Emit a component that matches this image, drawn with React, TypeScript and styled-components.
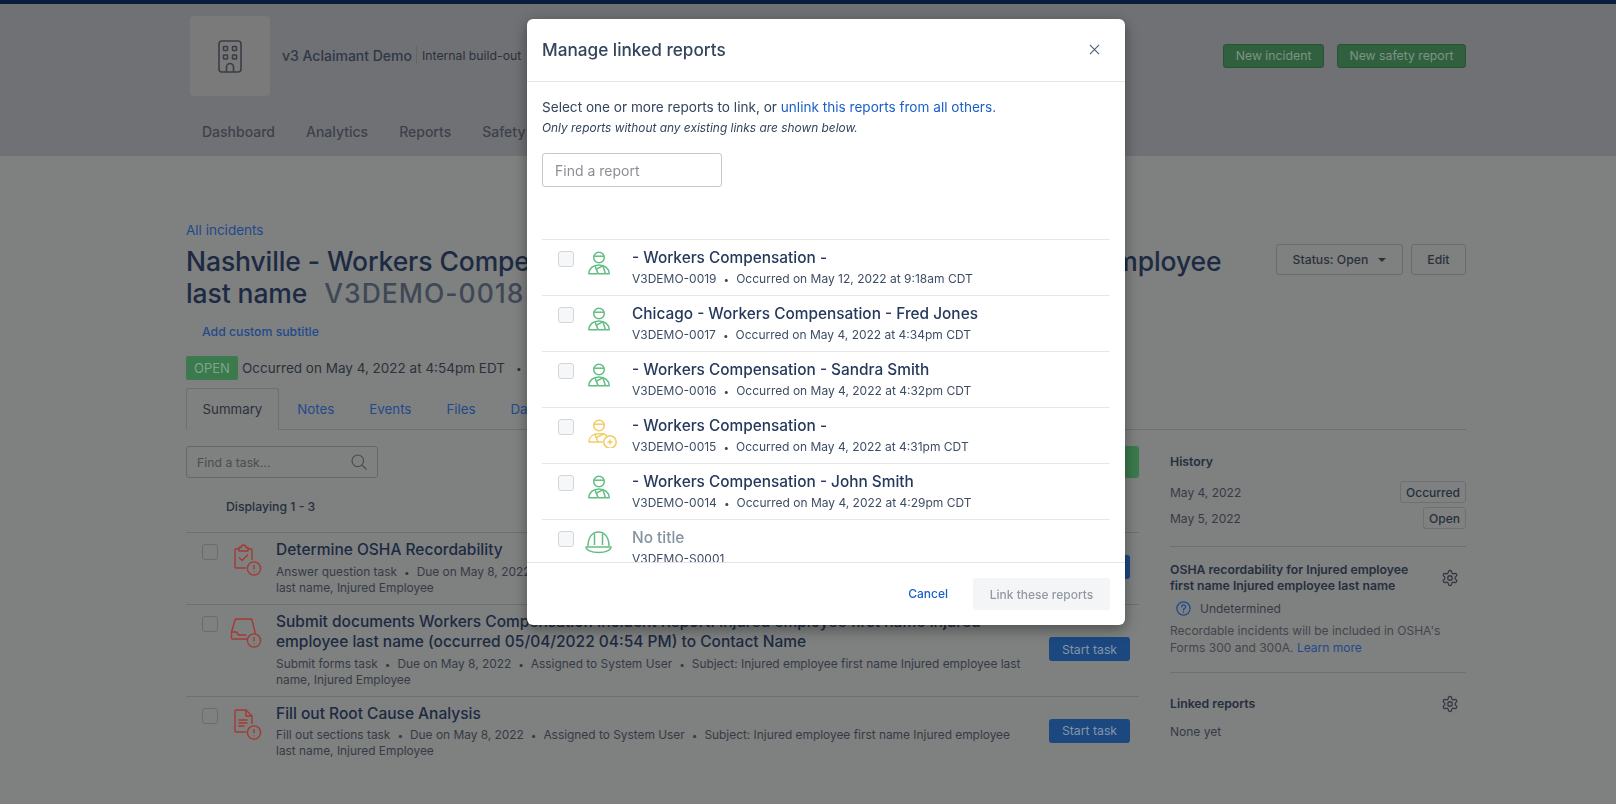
import React from "react";
import styled, { createGlobalStyle } from "styled-components";

const GlobalStyle = createGlobalStyle`
    html, body {
        margin: 0;
        height: 100%;
        overflow: hidden;
        background-color: #7f8080;
        font-family: Inter, "Liberation Sans", sans-serif;
        color: #262f3e;
    }
    * { box-sizing: border-box; }
`;

const TopStripe = styled.div`
    height: 4px;
    background-color: #0c1c3c;
`;

const Header = styled.header`
    height: 152px;
    background-color: #707175;
    padding-left: 186px;
`;

const HeaderInner = styled.div`
    width: 1280px;
    padding-top: 12px;
`;

const BrandRow = styled.div`
    display: flex;
    align-items: center;
    padding-left: 4px;
`;

const LogoBox = styled.div`
    width: 80px;
    height: 80px;
    background-color: #7a7a7a;
    border-radius: 4px;
    display: flex;
    align-items: center;
    justify-content: center;
`;

const BrandName = styled.div`
    margin: 0 0 2px 12px;
    font-size: 14px;
    font-weight: 500;
    color: #2f3847;
`;

const BrandNote = styled.div`
    margin: 0 0 2px 4px;
    padding-left: 5px;
    border-left: 1px solid #62656a;
    font-size: 12.25px;
    line-height: 19px;
    color: #2b313b;
`;

const HeaderActions = styled.div`
    margin-left: auto;
    display: flex;
    gap: 13px;
`;

const GreenButton = styled.div`
    height: 24px;
    padding: 0 11.5px 1px;
    display: flex;
    align-items: center;
    background-color: #31603f;
    border: 1px solid #2a5236;
    border-radius: 3px;
    font-size: 12.25px;
    color: #7d9484;
`;

const Nav = styled.nav`
    display: flex;
    gap: 31px;
    margin-top: 27px;
    padding-left: 16px;
    font-size: 14px;
    font-weight: 500;
    color: #3c414a;
`;

const Content = styled.main`
    width: 1280px;
    margin-left: 186px;
    padding-top: 64px;
`;

const BackLink = styled.div`
    font-size: 13.5px;
    line-height: 20px;
    color: #1f4a8c;
`;

const TitleRow = styled.div`
    display: flex;
    justify-content: space-between;
    margin-top: 5px;
`;

const PageTitle = styled.h1`
    width: 1080px;
    margin: 0;
    font-size: 26.5px;
    line-height: 32px;
    font-weight: 500;
    letter-spacing: -0.1px;
    color: #1c2a42;
`;

const RefCode = styled.span`
    margin-left: 17px;
    letter-spacing: 1px;
    color: #3f4855;
`;

const TitleActions = styled.div`
    display: flex;
    gap: 8px;
    margin-top: -1px;
`;

const OutlineButton = styled.div`
    height: 31px;
    padding: 0 15.5px;
    display: flex;
    align-items: center;
    gap: 8px;
    border: 1px solid #6a6b6c;
    border-radius: 3px;
    font-size: 12.25px;
    font-weight: 500;
    color: #2b313b;
`;

const Caret = styled.span`
    border-left: 4px solid transparent;
    border-right: 4px solid transparent;
    border-top: 4px solid #2b313b;
    margin-left: 2px;
`;

const SubtitleLink = styled.div`
    margin: 14px 0 0 16px;
    font-size: 12.25px;
    line-height: 18px;
    font-weight: 500;
    color: #1f4a8c;
`;

const MetaRow = styled.div`
    display: flex;
    align-items: center;
    gap: 4px;
    margin-top: 15px;
    font-size: 13.5px;
    white-space: nowrap;
    color: #2b313b;
`;

const StatusBadge = styled.span`
    width: 52px;
    height: 24px;
    display: flex;
    align-items: center;
    justify-content: center;
    background-color: #3a7a4c;
    border-radius: 2px;
    font-size: 13px;
    color: #7fa58a;
`;

const Tabs = styled.div`
    display: flex;
    height: 42px;
    margin-top: 8px;
    border-bottom: 1px solid #6e6f70;
    font-size: 13.3px;
`;

const Tab = styled.div<{ $active?: boolean }>`
    height: 42px;
    padding: 0 15.5px;
    margin-right: ${(p) => (p.$active ? "3px" : "4px")};
    display: flex;
    align-items: center;
    color: ${(p) => (p.$active ? "#2b313b" : "#1f4a8c")};
    ${(p) => p.$active && "border: 1px solid #6e6f70; border-bottom-color: #7f8080; border-radius: 3px 3px 0 0;"}
`;

const Columns = styled.div`
    display: flex;
    justify-content: space-between;
`;

const TaskColumn = styled.section`
    width: 953px;
`;

const TaskToolbar = styled.div`
    display: flex;
    justify-content: space-between;
    margin-top: 16px;
`;

const TaskSearch = styled.div`
    width: 192px;
    height: 32px;
    padding: 0 10px;
    display: flex;
    align-items: center;
    justify-content: space-between;
    border: 1px solid #66686a;
    border-radius: 3px;
    font-size: 12.25px;
    color: #4a4d52;
`;

const AddTaskButton = styled.div`
    width: 90px;
    height: 32px;
    background-color: #3a7a4c;
    border-radius: 3px;
`;

const Displaying = styled.div`
    height: 54px;
    padding: 20px 0 0 40px;
    font-size: 12.25px;
    font-weight: 500;
    line-height: 18px;
    color: #262f3e;
`;

const TaskRow = styled.div`
    display: flex;
    padding: 7px 0 8px 16px;
    border-top: 1px solid #6e6f70;
`;

const DimCheck = styled.div`
    flex: none;
    width: 16px;
    height: 16px;
    margin-top: 4px;
    border: 1px solid #6b6c6e;
    border-radius: 3px;
`;

const TaskIcon = styled.div`
    flex: none;
    width: 28px;
    height: 32px;
    margin: 4px 14px 0 16px;
`;

const TaskText = styled.div`
    flex: 1;
    min-width: 0;
`;

const TaskTitle = styled.div`
    font-size: 15.5px;
    line-height: 20.5px;
    font-weight: 500;
    color: #1c2a42;
`;

const TaskSub = styled.div`
    margin-top: 3px;
    font-size: 11.9px;
    line-height: 16px;
    color: #353b45;
`;

const Dot = styled.span`
    margin: 0 7px;
    font-size: 10px;
`;

const StartButton = styled.div`
    flex: none;
    align-self: center;
    width: 81px;
    height: 24px;
    margin: 0 9px 1px 19px;
    display: flex;
    align-items: center;
    justify-content: center;
    background-color: #1c4880;
    border-radius: 3px;
    font-size: 12.25px;
    color: #8594a8;
`;

const SideColumn = styled.aside`
    width: 296px;
    padding-top: 24px;
    font-size: 12px;
    color: #353b45;
`;

const SideSection = styled.div`
    padding: 0 0 16px;
    margin-bottom: 15px;
    border-bottom: 1px solid #6e6f70;
    &:last-child {
        border-bottom: none;
        padding-top: 7px;
    }
`;

const SideHeading = styled.div`
    font-size: 12.25px;
    line-height: 16px;
    font-weight: 600;
    color: #262f3e;
`;

const HeadingRow = styled.div`
    display: flex;
    justify-content: space-between;
    align-items: center;
    padding-right: 7px;
    gap: 20px;
`;

const GearWrap = styled.div`
    flex: none;
    width: 18px;
    height: 18px;
`;

const HistoryList = styled.div`
    margin: 9px 0 -1px;
`;

const HistoryRow = styled.div`
    display: flex;
    justify-content: space-between;
    align-items: center;
    height: 26px;
`;

const HistoryTag = styled.span`
    height: 22px;
    padding: 0 5px;
    display: flex;
    align-items: center;
    border: 1px solid #6e6f70;
    border-radius: 3px;
    font-weight: 500;
    color: #262f3e;
`;

const Undetermined = styled.div`
    display: flex;
    align-items: center;
    gap: 9px;
    margin: 4px 0 5px 6px;
    height: 20px;
`;

const SideNote = styled.div`
    line-height: 16.5px;
    color: #42464d;
`;

const SideLink = styled.span`
    color: #1f4a8c;
`;

const NoneYet = styled.div`
    margin-top: 11px;
    line-height: 16px;
`;

const Modal = styled.div`
    position: fixed;
    top: 19px;
    left: 527px;
    width: 598px;
    height: 606px;
    display: flex;
    flex-direction: column;
    background-color: #fff;
    border-radius: 6px;
    box-shadow: 0 4px 14px rgba(0, 0, 0, 0.4);
    color: #33445c;
`;

const ModalHeader = styled.div`
    flex: none;
    height: 63px;
    padding: 0 19px 2px 15px;
    display: flex;
    align-items: center;
    justify-content: space-between;
    border-bottom: 1px solid #e2e4e7;
`;

const ModalTitle = styled.h2`
    margin: 0;
    font-size: 17.2px;
    font-weight: 500;
    color: #33445c;
`;

const CloseButton = styled.div`
    width: 24px;
    height: 24px;
    display: flex;
    align-items: center;
    justify-content: center;
    color: #51637a;
`;

const ModalBody = styled.div`
    flex: 1;
    min-height: 0;
    display: flex;
    flex-direction: column;
    padding: 15px 15px 0;
`;

const Intro = styled.div`
    font-size: 13.6px;
    line-height: 20px;
`;

const IntroLink = styled.span`
    color: #1a5fc8;
`;

const IntroNote = styled.div`
    font-size: 11.9px;
    line-height: 21px;
    font-style: italic;
`;

const FindReport = styled.div`
    width: 180px;
    height: 34px;
    margin-top: 15px;
    padding: 0 12px;
    display: flex;
    align-items: center;
    flex: none;
    border: 1px solid #c3c6ca;
    border-radius: 3px;
    font-size: 14px;
    color: #8b8f94;
`;

const ReportList = styled.div`
    flex: 1;
    min-height: 0;
    margin-top: 52px;
    overflow: hidden;
`;

const ReportRow = styled.div`
    height: 56px;
    padding: 11px 0 0 16px;
    display: flex;
    border-top: 1px solid #e5e7ea;
`;

const ReportCheck = styled.div`
    flex: none;
    width: 16px;
    height: 16px;
    border: 1px solid #d3d6da;
    border-radius: 3px;
    background-color: #f6f7f8;
`;

const ReportIcon = styled.div`
    flex: none;
    width: 28px;
    height: 28px;
    margin: 0 16px 0 14px;
`;

const ReportText = styled.div`
    margin-top: -3px;
`;

const ReportTitle = styled.div<{ $muted?: boolean }>`
    font-size: 15.4px;
    line-height: 20px;
    font-weight: 500;
    white-space: nowrap;
    color: ${(p) => (p.$muted ? "#87929f" : "#24395b")};
`;

const ReportSub = styled.div`
    font-size: 12px;
    line-height: 16px;
    margin-top: 3px;
    white-space: nowrap;
    color: #3d4d63;
`;

const ModalFooter = styled.div`
    flex: none;
    height: 63px;
    padding: 0 15px;
    display: flex;
    align-items: center;
    justify-content: flex-end;
    gap: 25px;
    border-top: 1px solid #e2e4e7;
`;

const CancelLink = styled.div`
    font-size: 12px;
    font-weight: 500;
    margin-bottom: 1px;
    color: #1a5fc8;
`;

const LinkButton = styled.div`
    width: 137px;
    height: 32px;
    display: flex;
    align-items: center;
    justify-content: center;
    background-color: #f4f5f6;
    border-radius: 3px;
    font-size: 12px;
    font-weight: 500;
    color: #9299a3;
`;

function BuildingIcon() {
    return (
        <svg width="24" height="33" viewBox="0 0 24 33" fill="none" stroke="#3a3f47" strokeWidth="1.6">
            <rect x="1" y="1" width="22" height="31" rx="3" />
            <rect x="5.5" y="6.5" width="4" height="4" rx="0.6" />
            <rect x="14.5" y="6.5" width="4" height="4" rx="0.6" />
            <rect x="5.5" y="15" width="4" height="4" rx="0.6" />
            <rect x="14.5" y="15" width="4" height="4" rx="0.6" />
            <path d="M8.5 32v-5a3.5 3.5 0 0 1 7 0v5" />
        </svg>
    );
}

function WorkerIcon({ color }: { color: string }) {
    return (
        <svg width="22" height="24" viewBox="0 0 22 24" fill="none" stroke={color} strokeWidth="1.5" strokeLinejoin="round">
            <circle cx="11" cy="6.5" r="5.3" />
            <path d="M5.8 5.2h10.4" />
            <path d="M0.8 22.8C1 17.5 5 14 11 14s10 3.5 10.2 8.8z" />
            <path d="M7 14.8l3.2 8M7.5 18.5l7.5-3.6M15 15l2.5 7.8" />
        </svg>
    );
}

function WorkerAddIcon({ color }: { color: string }) {
    return (
        <svg width="29" height="29" viewBox="0 0 29 29" fill="none" stroke={color} strokeWidth="1.5" strokeLinejoin="round">
            <circle cx="11" cy="6.5" r="5.3" />
            <path d="M5.8 5.2h10.4" />
            <path d="M0.8 23C1 18 5 14.8 11 14.8h5l3 2.2M0.8 23h14" />
            <path d="M7 15.5l3 7.5M7.5 19l8-4" />
            <circle cx="22" cy="23" r="6.2" />
            <path d="M22 20.5v5M19.5 23h5" />
        </svg>
    );
}

const HatWrap = styled.div`
    margin-left: -3px;
`;

function HardHatIcon({ color }: { color: string }) {
    return (
        <HatWrap>
            <svg width="27" height="23" viewBox="0 0 27 23" fill="none" stroke={color} strokeWidth="1.5" strokeLinejoin="round">
                <path d="M3 15C3 6 7.5 1 13.5 1S24 6 24 15" />
                <path d="M9.5 2.5V14M17.5 2.5V14" />
                <path d="M1 16h25c0 3-5 5.5-12.5 5.5S1 19 1 16z" />
            </svg>
        </HatWrap>
    );
}

function AlertBadge() {
    return (
        <g stroke="#a33a33" strokeWidth="1.4" fill="#7f8080">
            <circle cx="20" cy="24.5" r="6.6" />
            <path d="M20 21v4.2M20 27.4v.8" />
        </g>
    );
}

const TaskSvg = styled.svg`
    overflow: visible;
`;

function ClipboardIcon() {
    return (
        <TaskSvg width="28" height="32" viewBox="0 0 28 32" fill="none" stroke="#a33a33" strokeWidth="1.4" strokeLinejoin="round">
            <path d="M5 5H2a1 1 0 0 0-1 1v17a1 1 0 0 0 1 1h10M14 5h3a1 1 0 0 1 1 1v10" />
            <path d="M5 7V3.5h2.2c0-3.4 4.6-3.4 4.6 0H14V7z" />
            <path d="M5 13.5l3 3 6-6" />
            <AlertBadge />
        </TaskSvg>
    );
}

function InboxIcon() {
    return (
        <TaskSvg width="28" height="32" viewBox="0 0 28 32" fill="none" stroke="#a33a33" strokeWidth="1.4" strokeLinejoin="round">
            <path d="M-2.5 16L1 4a1.5 1.5 0 0 1 1.5-1h14a1.5 1.5 0 0 1 1.5 1l3 12" />
            <path d="M-2.5 16v6a1 1 0 0 0 1 1H14M-2.5 16h5l2 3h8" />
            <path d="M21 16v2" />
            <AlertBadge />
        </TaskSvg>
    );
}

function FileIcon() {
    return (
        <TaskSvg width="28" height="32" viewBox="0 0 28 32" fill="none" stroke="#a33a33" strokeWidth="1.4" strokeLinejoin="round">
            <path d="M12 24H2a1 1 0 0 1-1-1V3a1 1 0 0 1 1-1h10l6 6v8" />
            <path d="M12 2v6h6M4.5 12h9M4.5 15h9M4.5 18h6" />
            <AlertBadge />
        </TaskSvg>
    );
}

function SearchIcon() {
    return (
        <svg width="16" height="16" viewBox="0 0 16 16" fill="none" stroke="#4a4d52" strokeWidth="1.2">
            <circle cx="6.8" cy="6.8" r="5.8" />
            <path d="M11 11l4.5 4.5" />
        </svg>
    );
}

function GearIcon() {
    return (
        <GearWrap>
            <svg width="18" height="18" viewBox="0 0 24 24" fill="none" stroke="#33383f" strokeWidth="1.7" strokeLinecap="round" strokeLinejoin="round">
                <path d="M12.2 2h-.4a2 2 0 0 0-2 2v.2a2 2 0 0 1-1 1.7l-.4.3a2 2 0 0 1-2 0l-.2-.1a2 2 0 0 0-2.7.7l-.2.4a2 2 0 0 0 .7 2.7l.2.1a2 2 0 0 1 1 1.7v.5a2 2 0 0 1-1 1.8l-.2.1a2 2 0 0 0-.7 2.7l.2.4a2 2 0 0 0 2.7.7l.2-.1a2 2 0 0 1 2 0l.4.3a2 2 0 0 1 1 1.7v.2a2 2 0 0 0 2 2h.4a2 2 0 0 0 2-2v-.2a2 2 0 0 1 1-1.7l.4-.3a2 2 0 0 1 2 0l.2.1a2 2 0 0 0 2.7-.7l.2-.4a2 2 0 0 0-.7-2.7l-.2-.1a2 2 0 0 1-1-1.8v-.5a2 2 0 0 1 1-1.7l.2-.1a2 2 0 0 0 .7-2.7l-.2-.4a2 2 0 0 0-2.7-.7l-.2.1a2 2 0 0 1-2 0l-.4-.3a2 2 0 0 1-1-1.7V4a2 2 0 0 0-2-2z" />
                <circle cx="12" cy="12" r="3" />
            </svg>
        </GearWrap>
    );
}

function QuestionIcon() {
    return (
        <svg width="15" height="15" viewBox="0 0 15 15" fill="none" stroke="#1f4a8c" strokeWidth="1.3" strokeLinecap="round">
            <circle cx="7.5" cy="7.5" r="6.6" />
            <path d="M5.6 5.8a2 2 0 1 1 2.9 1.8c-.6.3-1 .7-1 1.4" />
            <path d="M7.5 11v.2" />
        </svg>
    );
}

function CloseIcon() {
    return (
        <svg width="11" height="11" viewBox="0 0 12 12" fill="none" stroke="currentColor" strokeWidth="1.3">
            <path d="M1 1l10 10M11 1L1 11" />
        </svg>
    );
}

const GREEN = "#63bd82";
const YELLOW = "#f3cd62";

const reports = [
    { title: "- Workers Compensation -", code: "V3DEMO-0019", when: "Occurred on May 12, 2022 at 9:18am CDT", icon: <WorkerIcon color={GREEN} /> },
    { title: "Chicago - Workers Compensation - Fred Jones", code: "V3DEMO-0017", when: "Occurred on May 4, 2022 at 4:34pm CDT", icon: <WorkerIcon color={GREEN} /> },
    { title: "- Workers Compensation - Sandra Smith", code: "V3DEMO-0016", when: "Occurred on May 4, 2022 at 4:32pm CDT", icon: <WorkerIcon color={GREEN} /> },
    { title: "- Workers Compensation -", code: "V3DEMO-0015", when: "Occurred on May 4, 2022 at 4:31pm CDT", icon: <WorkerAddIcon color={YELLOW} /> },
    { title: "- Workers Compensation - John Smith", code: "V3DEMO-0014", when: "Occurred on May 4, 2022 at 4:29pm CDT", icon: <WorkerIcon color={GREEN} /> },
    { title: "No title", code: "V3DEMO-S0001", muted: true, icon: <HardHatIcon color={GREEN} /> },
];

const subject = "Subject: Injured employee first name Injured employee last name, Injured Employee";

const tasks = [
    { title: "Determine OSHA Recordability", kind: "Answer question task", icon: <ClipboardIcon /> },
    {
        title: "Submit documents Workers Compensation Incident Report: Injured employee first name Injured employee last name (occurred 05/04/2022 04:54 PM) to Contact Name",
        kind: "Submit forms task",
        icon: <InboxIcon />,
    },
    { title: "Fill out Root Cause Analysis", kind: "Fill out sections task", icon: <FileIcon /> },
];

export default function App() {
    return (
        <>
            <GlobalStyle />
            <TopStripe />
            <Header>
                <HeaderInner>
                    <BrandRow>
                        <LogoBox><BuildingIcon /></LogoBox>
                        <BrandName>v3 Aclaimant Demo</BrandName>
                        <BrandNote>Internal build-out</BrandNote>
                        <HeaderActions>
                            <GreenButton>New incident</GreenButton>
                            <GreenButton>New safety report</GreenButton>
                        </HeaderActions>
                    </BrandRow>
                    <Nav>
                        <span>Dashboard</span>
                        <span>Analytics</span>
                        <span>Reports</span>
                        <span>Safety</span>
                    </Nav>
                </HeaderInner>
            </Header>
            <Content>
                <BackLink>All incidents</BackLink>
                <TitleRow>
                    <PageTitle>
                        Nashville - Workers Compensation - Injured employee first name Injured employee last name
                        <RefCode>V3DEMO-0018</RefCode>
                    </PageTitle>
                    <TitleActions>
                        <OutlineButton>Status: Open <Caret /></OutlineButton>
                        <OutlineButton>Edit</OutlineButton>
                    </TitleActions>
                </TitleRow>
                <SubtitleLink>Add custom subtitle</SubtitleLink>
                <MetaRow>
                    <StatusBadge>OPEN</StatusBadge>
                    Occurred on May 4, 2022 at 4:54pm EDT
                    <Dot>•</Dot>
                </MetaRow>
                <Tabs>
                    <Tab $active>Summary</Tab>
                    <Tab>Notes</Tab>
                    <Tab>Events</Tab>
                    <Tab>Files</Tab>
                    <Tab>Data</Tab>
                </Tabs>
                <Columns>
                    <TaskColumn>
                        <TaskToolbar>
                            <TaskSearch>Find a task... <SearchIcon /></TaskSearch>
                            <AddTaskButton />
                        </TaskToolbar>
                        <Displaying>Displaying 1 - 3</Displaying>
                        {tasks.map((task) => (
                            <TaskRow key={task.kind}>
                                <DimCheck />
                                <TaskIcon>{task.icon}</TaskIcon>
                                <TaskText>
                                    <TaskTitle>{task.title}</TaskTitle>
                                    <TaskSub>
                                        {task.kind}<Dot>•</Dot>Due on May 8, 2022<Dot>•</Dot>Assigned to System User<Dot>•</Dot>{subject}
                                    </TaskSub>
                                </TaskText>
                                <StartButton>Start task</StartButton>
                            </TaskRow>
                        ))}
                    </TaskColumn>
                    <SideColumn>
                        <SideSection>
                            <SideHeading>History</SideHeading>
                            <HistoryList>
                                <HistoryRow>May 4, 2022 <HistoryTag>Occurred</HistoryTag></HistoryRow>
                                <HistoryRow>May 5, 2022 <HistoryTag>Open</HistoryTag></HistoryRow>
                            </HistoryList>
                        </SideSection>
                        <SideSection>
                            <HeadingRow>
                                <SideHeading>OSHA recordability for Injured employee first name Injured employee last name</SideHeading>
                                <GearIcon />
                            </HeadingRow>
                            <Undetermined><QuestionIcon /> Undetermined</Undetermined>
                            <SideNote>
                                Recordable incidents will be included in OSHA's Forms 300 and 300A. <SideLink>Learn more</SideLink>
                            </SideNote>
                        </SideSection>
                        <SideSection>
                            <HeadingRow>
                                <SideHeading>Linked reports</SideHeading>
                                <GearIcon />
                            </HeadingRow>
                            <NoneYet>None yet</NoneYet>
                        </SideSection>
                    </SideColumn>
                </Columns>
            </Content>
            <Modal>
                <ModalHeader>
                    <ModalTitle>Manage linked reports</ModalTitle>
                    <CloseButton><CloseIcon /></CloseButton>
                </ModalHeader>
                <ModalBody>
                    <Intro>Select one or more reports to link, or <IntroLink>unlink this reports from all others.</IntroLink></Intro>
                    <IntroNote>Only reports without any existing links are shown below.</IntroNote>
                    <FindReport>Find a report</FindReport>
                    <ReportList>
                        {reports.map((report) => (
                            <ReportRow key={report.code}>
                                <ReportCheck />
                                <ReportIcon>{report.icon}</ReportIcon>
                                <ReportText>
                                    <ReportTitle $muted={report.muted}>{report.title}</ReportTitle>
                                    <ReportSub>
                                        {report.code}
                                        {report.when && <><Dot>•</Dot>{report.when}</>}
                                    </ReportSub>
                                </ReportText>
                            </ReportRow>
                        ))}
                    </ReportList>
                </ModalBody>
                <ModalFooter>
                    <CancelLink>Cancel</CancelLink>
                    <LinkButton>Link these reports</LinkButton>
                </ModalFooter>
            </Modal>
        </>
    );
}
